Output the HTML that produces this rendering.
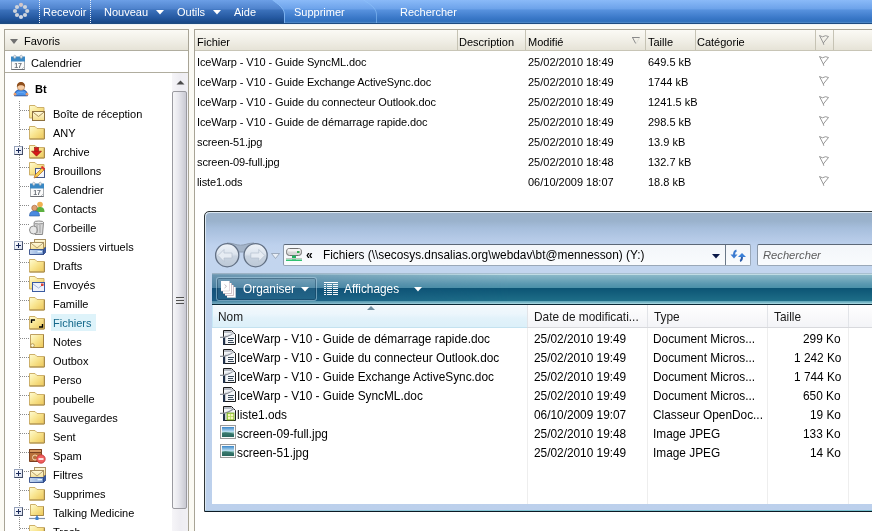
<!DOCTYPE html>
<html><head><meta charset="utf-8">
<style>
*{margin:0;padding:0;box-sizing:border-box}
html,body{width:872px;height:531px;overflow:hidden;background:#fbfaf4;font-family:"Liberation Sans",sans-serif;font-size:11px;color:#000}
.a{position:absolute;will-change:transform}
#top{left:0;top:0;width:872px;height:24px}
#top .lbl{color:#fff;font-size:11px;top:6px;white-space:nowrap}
.dots{top:0;height:24px;width:1px;background:repeating-linear-gradient(to bottom,#e8f0fa 0 1px,transparent 1px 2px)}
.tri{width:0;height:0;border-left:3.5px solid transparent;border-right:3.5px solid transparent;border-top:4px solid #fff}
#lp{left:4px;top:29px;width:185px;height:510px;border:1px solid #a8a496;background:#fff}
.hdr{background:linear-gradient(to bottom,#fbfaf5,#efede4 60%,#e6e3d7)}
.ti{left:53px;font-size:11px;line-height:13px;white-space:nowrap}
.sel{color:#14688a}
.br{left:20px;width:9px;height:1px;background:repeating-linear-gradient(to right,#8a8a8a 0 1px,transparent 1px 2px)}
.plus{left:14px;width:9px;height:9px;border:1px solid;border-color:#98a4bc #46506a #3c4660 #98a4bc;background:linear-gradient(to bottom right,#fff,#d8dff0)}
.plus:before{content:"";position:absolute;left:1px;top:3px;width:5px;height:1px;background:#1a2a5a}
.plus:after{content:"";position:absolute;left:3px;top:1px;width:1px;height:5px;background:#1a2a5a}
#rp{left:194px;top:29px;width:690px;height:510px;border:1px solid #a8a496;background:#fff}
.ch{top:0;height:21px;border-right:1px solid #c6c3b6;padding:5px 0 0 3px;white-space:nowrap}
.fr{white-space:nowrap;font-size:11px}
#win{left:204px;top:211px;width:690px;height:301px;border:1px solid #2c2c2c;border-radius:6px 0 0 0;background:linear-gradient(to bottom,#a7bbd6 0,#b4c6df 20%,#c4d4ea 60%,#c9d8ec 100%);overflow:hidden}
.seg{font-size:11.85px;white-space:nowrap}
</style></head><body>
<svg width="0" height="0" style="position:absolute">
<defs>
 <linearGradient id="gF" x1="0" y1="0" x2="1" y2="1"><stop offset="0" stop-color="#fffcd4"/><stop offset="0.45" stop-color="#f9e692"/><stop offset="1" stop-color="#ecc658"/></linearGradient><linearGradient id="gE" x1="0" y1="0" x2="0" y2="1"><stop offset="0" stop-color="#fffbe0"/><stop offset="1" stop-color="#f4dc88"/></linearGradient><linearGradient id="gT" x1="0" y1="0" x2="1" y2="0"><stop offset="0" stop-color="#c8d8f0"/><stop offset="0.6" stop-color="#9ab8e0"/><stop offset="1" stop-color="#5a80c0"/></linearGradient>
 <linearGradient id="gB" x1="0" y1="0" x2="0" y2="1"><stop offset="0" stop-color="#a8c8ea"/><stop offset="1" stop-color="#3a70b0"/></linearGradient>
 <symbol id="i-folder" viewBox="0 0 18 17"><path d="M1.5 2.5h5.5l2 2h7v10.5h-14.5z" fill="url(#gF)" stroke="#cdb06a"/><path d="M16.5 4.5v10.5h-15" fill="none" stroke="#a88a48"/></symbol>
 <symbol id="i-inbox" viewBox="0 0 18 17"><path d="M1.5 0.5h5.5l2 2h7v10.5h-14.5z" fill="url(#gF)" stroke="#cdb06a"/><rect x="4.5" y="6.5" width="12" height="9" fill="url(#gE)" stroke="#8c7040"/><path d="M4.8 7l5.7 4.5 5.7-4.5" fill="none" stroke="#a08450" stroke-width="0.9"/></symbol>
 <symbol id="i-archive" viewBox="0 0 18 17"><path d="M1.5 2.5h5.5l2 2h7v10.5h-14.5z" fill="url(#gF)" stroke="#cdb06a"/><path d="M16.5 4.5v10.5h-15" fill="none" stroke="#a88a48"/><rect x="6.5" y="4.5" width="4" height="4" fill="#d81818" stroke="#901010" stroke-width="0.6"/><path d="M3.5 8.2H13.5L8.5 13.2Z" fill="#d81818" stroke="#901010" stroke-width="0.6"/></symbol>
 <symbol id="i-drafts" viewBox="0 0 18 17"><path d="M1.5 0.5h5.5l2 2h7v10.5h-14.5z" fill="url(#gF)" stroke="#cdb06a"/><rect x="7.5" y="6.5" width="9" height="9" fill="#f4f6fb" stroke="#4a5a88"/><path d="M6 16l1.2-3.2 7.3-7.3 2 2-7.3 7.3z" fill="#f8d050" stroke="#b06020" stroke-width="0.7"/><path d="M13.5 4.5l3 3" stroke="#e03030" stroke-width="1.8"/></symbol>
 <symbol id="i-cal" viewBox="0 0 18 17"><rect x="2.5" y="3.5" width="13" height="12" fill="#fbfbfb" stroke="#a8acb0"/><path d="M2.5 15.5h13" stroke="#6a6e74"/><rect x="2" y="2.5" width="14" height="5" fill="#3a88c4"/><ellipse cx="5.8" cy="2.8" rx="1.2" ry="1.6" fill="#eef2f6" stroke="#8a98a8" stroke-width="0.6"/><ellipse cx="12.2" cy="2.8" rx="1.2" ry="1.6" fill="#eef2f6" stroke="#8a98a8" stroke-width="0.6"/><text x="5.2" y="13.6" font-size="7" font-weight="bold" font-family="Liberation Sans" fill="#6a7078">17</text><path d="M13 15l2-2" stroke="#b0b4b8" stroke-width="0.8"/></symbol>
 <symbol id="i-contacts" viewBox="0 0 18 17"><circle cx="12" cy="4.5" r="2.8" fill="#f0b050"/><path d="M7.5 12c0-4 2-5 4.5-5s4.5 1 4.5 5z" fill="#5cb040"/><circle cx="6.5" cy="8" r="2.8" fill="#e0a070" stroke="#8a4a20" stroke-width="0.5"/><path d="M1.5 16c0-4 2-5 5-5s5 1 5 5z" fill="#4a8ae0" stroke="#2a5aa0" stroke-width="0.6"/></symbol>
 <symbol id="i-trash" viewBox="0 0 18 17"><path d="M6 3.5h9.5l-1 12h-7.5z" fill="#d8d8d8" stroke="#8a8a8a"/><ellipse cx="10.8" cy="3.5" rx="4.8" ry="1.5" fill="#eee" stroke="#8a8a8a"/><circle cx="5.5" cy="11" r="4" fill="#e8e8e8" stroke="#8a8a8a"/><path d="M9 6v8M12 6v8" stroke="#a0a0a0"/></symbol>
 <symbol id="i-vfold" viewBox="0 0 18 17"><rect x="6.5" y="1.5" width="11" height="8" fill="url(#gE)" stroke="#a89060"/><rect x="2.5" y="4.5" width="13" height="8" fill="url(#gE)" stroke="#a89060"/><path d="M2.8 5l6.2 5 6.2-5" fill="none" stroke="#b09868" stroke-width="0.9"/><path d="M1.5 11.5H15.5L17.5 9.5V14.5L15.5 16.5H1.5Z" fill="url(#gT)" stroke="#304a88" stroke-width="0.9"/><path d="M15.5 11.5V16.5" stroke="#203870"/><path d="M15.5 11.5L17.5 9.5V14.5L15.5 16.5Z" fill="#3a5aa0"/><rect x="9.5" y="13" width="4.5" height="1.4" fill="#e8f4ff"/></symbol>
 <symbol id="i-sent" viewBox="0 0 18 17"><path d="M1.5 0.5h5.5l2 2h7v10.5h-14.5z" fill="url(#gF)" stroke="#cdb06a"/><rect x="4.5" y="6.5" width="12" height="9" fill="#eef2fa" stroke="#3a5aa0"/><path d="M5 8l5.5 4 5.5-4" fill="none" stroke="#90a8d0" stroke-width="0.8"/><rect x="13" y="7.5" width="2.5" height="2.5" fill="#e04030"/></symbol>
 <symbol id="i-files" viewBox="0 0 18 17"><path d="M1.5 2.5h5.5l2 2h7v10.5h-14.5z" fill="url(#gF)" stroke="#cdb06a"/><path d="M16.5 4.5v10.5h-15" fill="none" stroke="#a88a48"/><path d="M3.5 9v-3h3.5M14.5 10v3h-3.5" fill="none" stroke="#000" stroke-width="1.4"/></symbol>
 <symbol id="i-notes" viewBox="0 0 18 17"><path d="M2.5 1.5h13v13h-13z" fill="url(#gF)" stroke="#bfa060"/><path d="M15.5 1.5v13h-13" fill="none" stroke="#a08040"/><circle cx="4.5" cy="12.5" r="1.8" fill="#fff8d0" stroke="#a08040" stroke-width="0.7"/></symbol>
 <symbol id="i-spam" viewBox="0 0 18 17"><path d="M1.5 2.5h12v12h-12z" fill="#b8703a" stroke="#7a4020"/><path d="M1.5 2.5h12v3h-12z" fill="#d89860" stroke="#7a4020"/><circle cx="7" cy="10.5" r="2.5" fill="none" stroke="#f8d8b0" stroke-width="1"/><circle cx="13" cy="12" r="4.2" fill="#f06060" stroke="#c03030" stroke-width="0.8"/><rect x="10.5" y="11.2" width="5" height="1.6" fill="#fff"/></symbol>
 <symbol id="i-net" viewBox="0 0 18 17"><path d="M2.5 0.5h5l2 2h6v9h-13z" fill="url(#gF)" stroke="#cdb06a"/><path d="M15.5 2.5v9h-13" fill="none" stroke="#a88a48"/><path d="M9 11.5v3" stroke="#3a70c0" stroke-width="1.5"/><path d="M1 14.5h16" stroke="#8090a8" stroke-width="1.2"/><rect x="7.5" y="13" width="3" height="3" fill="#3a80d0"/></symbol>
 <symbol id="i-user" viewBox="0 0 16 16"><path d="M1.5 14.8C1.5 10.5 4 8.6 8 8.6S14.5 10.5 14.5 14.8Z" fill="#4a92ea" stroke="#1e4a9a" stroke-width="0.9"/><path d="M4 12.5C5 11 11 11 12 12.5" fill="none" stroke="#8ac0f8" stroke-width="0.8" opacity="0.6"/><circle cx="2" cy="13.2" r="1.4" fill="#e89a68"/><circle cx="14" cy="13.2" r="1.4" fill="#e89a68"/><rect x="4.3" y="2" width="7.4" height="7.2" rx="3.2" fill="#f6cca4" stroke="#9a6a40" stroke-width="0.5"/><path d="M4 6C3.8 2.5 5.5 1 8 1S12.2 2.5 12 6C11 4.5 9 4.2 8 4.2S5 4.5 4 6Z" fill="#8e4e1c"/></symbol>
<symbol id="i-flag" viewBox="0 0 12 11"><path d="M0.5 0.5L3.5 1.8L6.5 0.7L9.5 1.5L4.3 8M0.5 0.5L4.3 8L4.8 9.8" fill="none" stroke="#8c8c8c" stroke-width="0.9"/></symbol>
<symbol id="e-doc" viewBox="0 0 17 16"><path d="M3.5 1.5H11.5L15.5 5.5V15.5H3.5Z" fill="#f4f6f8" stroke="#1a1a1a"/><path d="M4 2H11L13 4H4Z" fill="#b8bcc4"/><rect x="3" y="8" width="2.2" height="8" fill="#203048"/><path d="M0 8.3C5 8.6 9 7.5 14 3.5" fill="none" stroke="#8a8e96" stroke-width="1.2"/><path d="M5 6.5C8 6.2 10 5.5 13 4" fill="none" stroke="#d8dce2" stroke-width="1"/><rect x="8" y="9" width="6" height="1" fill="#3a4a5a"/><rect x="8" y="11" width="5" height="1" fill="#3a4a5a"/><rect x="8" y="13" width="6" height="1" fill="#3a4a5a"/></symbol>
<symbol id="e-ods" viewBox="0 0 17 16"><path d="M3.5 1.5H11.5L15.5 5.5V15.5H3.5Z" fill="#f4f6f8" stroke="#1a1a1a"/><path d="M4 2H11L13 4H4Z" fill="#b8bcc4"/><rect x="3" y="8" width="2.2" height="8" fill="#203048"/><path d="M0 8.3C5 8.6 9 7.5 14 3.5" fill="none" stroke="#8a8e96" stroke-width="1.2"/><rect x="7" y="8" width="7" height="7" fill="#b8e060" stroke="#70a020" stroke-width="0.8"/><rect x="8" y="9" width="2.2" height="2.2" fill="#f8f8c0"/><rect x="11" y="9" width="2.2" height="2.2" fill="#f8f8c0"/><rect x="8" y="12" width="2.2" height="2.2" fill="#f8f8c0"/><rect x="11" y="12" width="2.2" height="2.2" fill="#f8f8c0"/></symbol>
<symbol id="e-img" viewBox="0 0 17 16"><defs><linearGradient id="gSky" x1="0" y1="0" x2="0" y2="1"><stop offset="0" stop-color="#3a86c8"/><stop offset="0.45" stop-color="#b8dcf0"/><stop offset="0.6" stop-color="#7ab8a8"/><stop offset="1" stop-color="#1e5a58"/></linearGradient></defs><rect x="0.5" y="1.5" width="15" height="13" fill="#fafafa" stroke="#9a9a9a"/><rect x="2" y="3" width="12" height="10" fill="url(#gSky)"/><path d="M2 9C5 7.5 9 8.5 14 10V13H2Z" fill="#2a6a60" opacity="0.8"/></symbol>
</defs>
</svg>
<div id="top" class="a">
  <svg class="a" style="left:0;top:0" width="872" height="25">
    <defs>
      <linearGradient id="tA" x1="0" y1="0" x2="0" y2="23" gradientUnits="userSpaceOnUse"><stop offset="0" stop-color="#6c9fe6"/><stop offset="0.39" stop-color="#4e82cc"/><stop offset="0.43" stop-color="#3c72bc"/><stop offset="0.78" stop-color="#2458a0"/><stop offset="0.96" stop-color="#1a4a88"/></linearGradient>
      <linearGradient id="tB" x1="0" y1="0" x2="0" y2="23" gradientUnits="userSpaceOnUse"><stop offset="0" stop-color="#8abaf8"/><stop offset="0.39" stop-color="#6ca2ea"/><stop offset="0.43" stop-color="#5892de"/><stop offset="0.78" stop-color="#3a78c8"/><stop offset="0.93" stop-color="#3070bc"/><stop offset="0.96" stop-color="#4a84c4"/></linearGradient>
    </defs>
    <rect x="0" y="0" width="872" height="23" fill="url(#tB)"/>
    <path d="M0 0H272.5C278 4 284 8 284.5 14V23H0Z" fill="url(#tA)"/>
    <path d="M272.5 0C278 4 284 8 284.5 14V23" fill="none" stroke="#8cc0fa" stroke-width="1" opacity="0.8"/>
    <path d="M363.5 0C370 4 376 8 376.5 14V23" fill="none" stroke="#90c4fa" stroke-width="1" opacity="0.55"/>
    <rect x="0" y="23" width="872" height="1" fill="#1e4c80"/>
    <rect x="0" y="24" width="872" height="1" fill="#eef3f6"/>
  </svg>
  <svg class="a" style="left:12px;top:2px" width="18" height="18" viewBox="0 0 18 18">
    <g fill="#cdd3db">
      <circle cx="9" cy="2.8" r="2.1" fill="#d2c6c8"/><circle cx="13" cy="5" r="2.1"/><circle cx="15.2" cy="9" r="2.1"/><circle cx="13" cy="13" r="2.1"/>
      <circle cx="9" cy="15" r="2.1" fill="#d0d8e6"/><circle cx="5" cy="13" r="2.1"/><circle cx="3" cy="9" r="2.1"/><circle cx="5" cy="5" r="2.1"/>
    </g>
  </svg>
  <div class="a dots" style="left:39px"></div>
  <div class="a lbl" style="left:43px">Recevoir</div>
  <div class="a dots" style="left:90px"></div>
  <div class="a lbl" style="left:104px">Nouveau</div>
  <svg class="a" style="left:156px;top:10px" width="8" height="5"><path d="M0 0h8l-4 4.5z" fill="#fff"/></svg>
  <div class="a lbl" style="left:177px">Outils</div>
  <svg class="a" style="left:213px;top:10px" width="8" height="5"><path d="M0 0h8l-4 4.5z" fill="#fff"/></svg>
  <div class="a lbl" style="left:234px">Aide</div>
  <div class="a lbl" style="left:294px">Supprimer</div>
  <div class="a lbl" style="left:400px">Rechercher</div>
</div>
<div id="lp" class="a"></div>
<div class="a hdr" style="left:5px;top:30px;width:183px;height:21px;border-bottom:1px solid #b0ad9f"></div>
<div class="a" style="left:10px;top:39px;width:0;height:0;border-left:4.5px solid transparent;border-right:4.5px solid transparent;border-top:5px solid #707070"></div>
<div class="a ti" style="left:24px;top:35px">Favoris</div>
<svg class="a" style="left:9px;top:54px" width="18" height="17"><use href="#i-cal"/></svg>
<div class="a ti" style="left:31px;top:57px">Calendrier</div>
<div class="a" style="left:5px;top:72px;width:183px;height:1px;background:#b0ad9f"></div>
<svg class="a" style="left:13px;top:81px" width="16" height="16"><use href="#i-user"/></svg>
<div class="a ti" style="left:35px;top:83px;font-weight:bold">Bt</div>
<div class="a" style="left:19px;top:101px;width:1px;height:430px;background:repeating-linear-gradient(to bottom,#8a8a8a 0 1px,transparent 1px 2px)"></div>
<div class="a" style="left:172px;top:73px;width:16px;height:458px;background:linear-gradient(to right,#f6f5f8,#eeedf2 50%,#f1f0f4)"></div>
<svg class="a" style="left:176px;top:80px" width="9" height="5"><path d="M0.5 4.5L4.5 0.5L8.5 4.5Z" fill="#4a4a4a"/></svg>
<div class="a" style="left:172px;top:91px;width:15px;height:418px;border:1px solid #9a9aa0;border-radius:2px;background:linear-gradient(to right,#f6f6f8,#e8e8ee 40%,#c9c9d2 100%)"></div>
<div class="a" style="left:176px;top:297px;width:8px;height:7px;background:repeating-linear-gradient(to bottom,#505050 0 1px,#e8e8e8 1px 2px,transparent 2px 3px)"></div>

<div class="a" style="left:51px;top:314px;width:45px;height:17px;background:#def3fa"></div>
<div class="a br" style="top:110px"></div>
<svg class="a" style="left:28px;top:105px" width="18" height="17"><use href="#i-inbox"/></svg>
<div class="a ti" style="top:108px">Boîte de réception</div>
<div class="a br" style="top:129px"></div>
<svg class="a" style="left:28px;top:124px" width="18" height="17"><use href="#i-folder"/></svg>
<div class="a ti" style="top:127px">ANY</div>
<div class="a br" style="top:148px"></div>
<div class="a plus" style="top:146px"></div>
<svg class="a" style="left:28px;top:143px" width="18" height="17"><use href="#i-archive"/></svg>
<div class="a ti" style="top:146px">Archive</div>
<div class="a br" style="top:167px"></div>
<svg class="a" style="left:28px;top:162px" width="18" height="17"><use href="#i-drafts"/></svg>
<div class="a ti" style="top:165px">Brouillons</div>
<div class="a br" style="top:186px"></div>
<svg class="a" style="left:28px;top:181px" width="18" height="17"><use href="#i-cal"/></svg>
<div class="a ti" style="top:184px">Calendrier</div>
<div class="a br" style="top:205px"></div>
<svg class="a" style="left:28px;top:200px" width="18" height="17"><use href="#i-contacts"/></svg>
<div class="a ti" style="top:203px">Contacts</div>
<div class="a br" style="top:224px"></div>
<svg class="a" style="left:28px;top:219px" width="18" height="17"><use href="#i-trash"/></svg>
<div class="a ti" style="top:222px">Corbeille</div>
<div class="a br" style="top:243px"></div>
<div class="a plus" style="top:241px"></div>
<svg class="a" style="left:28px;top:238px" width="18" height="17"><use href="#i-vfold"/></svg>
<div class="a ti" style="top:241px">Dossiers virtuels</div>
<div class="a br" style="top:262px"></div>
<svg class="a" style="left:28px;top:257px" width="18" height="17"><use href="#i-folder"/></svg>
<div class="a ti" style="top:260px">Drafts</div>
<div class="a br" style="top:281px"></div>
<svg class="a" style="left:28px;top:276px" width="18" height="17"><use href="#i-sent"/></svg>
<div class="a ti" style="top:279px">Envoyés</div>
<div class="a br" style="top:300px"></div>
<svg class="a" style="left:28px;top:295px" width="18" height="17"><use href="#i-folder"/></svg>
<div class="a ti" style="top:298px">Famille</div>
<div class="a br" style="top:319px"></div>
<svg class="a" style="left:28px;top:314px" width="18" height="17"><use href="#i-files"/></svg>
<div class="a ti sel" style="top:317px">Fichiers</div>
<div class="a br" style="top:338px"></div>
<svg class="a" style="left:28px;top:333px" width="18" height="17"><use href="#i-notes"/></svg>
<div class="a ti" style="top:336px">Notes</div>
<div class="a br" style="top:357px"></div>
<svg class="a" style="left:28px;top:352px" width="18" height="17"><use href="#i-folder"/></svg>
<div class="a ti" style="top:355px">Outbox</div>
<div class="a br" style="top:376px"></div>
<svg class="a" style="left:28px;top:371px" width="18" height="17"><use href="#i-folder"/></svg>
<div class="a ti" style="top:374px">Perso</div>
<div class="a br" style="top:395px"></div>
<svg class="a" style="left:28px;top:390px" width="18" height="17"><use href="#i-folder"/></svg>
<div class="a ti" style="top:393px">poubelle</div>
<div class="a br" style="top:414px"></div>
<svg class="a" style="left:28px;top:409px" width="18" height="17"><use href="#i-folder"/></svg>
<div class="a ti" style="top:412px">Sauvegardes</div>
<div class="a br" style="top:433px"></div>
<svg class="a" style="left:28px;top:428px" width="18" height="17"><use href="#i-folder"/></svg>
<div class="a ti" style="top:431px">Sent</div>
<div class="a br" style="top:452px"></div>
<svg class="a" style="left:28px;top:447px" width="18" height="17"><use href="#i-spam"/></svg>
<div class="a ti" style="top:450px">Spam</div>
<div class="a br" style="top:471px"></div>
<div class="a plus" style="top:469px"></div>
<svg class="a" style="left:28px;top:466px" width="18" height="17"><use href="#i-vfold"/></svg>
<div class="a ti" style="top:469px">Filtres</div>
<div class="a br" style="top:490px"></div>
<svg class="a" style="left:28px;top:485px" width="18" height="17"><use href="#i-folder"/></svg>
<div class="a ti" style="top:488px">Supprimes</div>
<div class="a br" style="top:509px"></div>
<div class="a plus" style="top:507px"></div>
<svg class="a" style="left:28px;top:504px" width="18" height="17"><use href="#i-net"/></svg>
<div class="a ti" style="top:507px">Talking Medicine</div>
<div class="a br" style="top:528px"></div>
<svg class="a" style="left:28px;top:523px" width="18" height="17"><use href="#i-folder"/></svg>
<div class="a ti" style="top:526px">Trash</div><div id="rp" class="a"></div>
<div class="a hdr" style="left:195px;top:30px;width:677px;height:21px;border-bottom:1px solid #c8c5b6"></div>
<div class="a" style="left:457px;top:30px;width:1px;height:20px;background:#c6c3b4"></div>
<div class="a" style="left:525px;top:30px;width:1px;height:20px;background:#c6c3b4"></div>
<div class="a" style="left:645px;top:30px;width:1px;height:20px;background:#c6c3b4"></div>
<div class="a" style="left:695px;top:30px;width:1px;height:20px;background:#c6c3b4"></div>
<div class="a" style="left:815px;top:30px;width:1px;height:20px;background:#c6c3b4"></div>
<div class="a" style="left:833px;top:30px;width:1px;height:20px;background:#c6c3b4"></div>
<div class="a ti" style="left:197px;top:36px">Fichier</div>
<div class="a ti" style="left:459px;top:36px">Description</div>
<div class="a ti" style="left:528px;top:36px">Modifié</div>
<div class="a ti" style="left:648px;top:36px">Taille</div>
<div class="a ti" style="left:697px;top:36px">Catégorie</div>
<svg class="a" style="left:631px;top:36px" width="10" height="9"><path d="M1 1.5h8" stroke="#8a8a8a" stroke-width="1"/><path d="M1.5 1.5L4.7 7.5" stroke="#8a8a8a" stroke-width="1"/><path d="M8.5 1.5L5.2 7.5" stroke="#dcdcd4" stroke-width="0.8"/></svg>
<svg class="a" style="left:819px;top:35px" width="12" height="11"><use href="#i-flag"/></svg>
<div class="a ti" style="left:197px;top:56px;letter-spacing:-0.1px">IceWarp - V10 - Guide SyncML.doc</div>
<div class="a ti" style="left:528px;top:56px">25/02/2010 18:49</div>
<div class="a ti" style="left:648px;top:56px">649.5 kB</div>
<svg class="a" style="left:819px;top:56px" width="12" height="11"><use href="#i-flag"/></svg>
<div class="a ti" style="left:197px;top:76px;letter-spacing:-0.1px">IceWarp - V10 - Guide Exchange ActiveSync.doc</div>
<div class="a ti" style="left:528px;top:76px">25/02/2010 18:49</div>
<div class="a ti" style="left:648px;top:76px">1744 kB</div>
<svg class="a" style="left:819px;top:76px" width="12" height="11"><use href="#i-flag"/></svg>
<div class="a ti" style="left:197px;top:96px;letter-spacing:-0.1px">IceWarp - V10 - Guide du connecteur Outlook.doc</div>
<div class="a ti" style="left:528px;top:96px">25/02/2010 18:49</div>
<div class="a ti" style="left:648px;top:96px">1241.5 kB</div>
<svg class="a" style="left:819px;top:96px" width="12" height="11"><use href="#i-flag"/></svg>
<div class="a ti" style="left:197px;top:116px;letter-spacing:-0.1px">IceWarp - V10 - Guide de démarrage rapide.doc</div>
<div class="a ti" style="left:528px;top:116px">25/02/2010 18:49</div>
<div class="a ti" style="left:648px;top:116px">298.5 kB</div>
<svg class="a" style="left:819px;top:116px" width="12" height="11"><use href="#i-flag"/></svg>
<div class="a ti" style="left:197px;top:136px;letter-spacing:-0.1px">screen-51.jpg</div>
<div class="a ti" style="left:528px;top:136px">25/02/2010 18:49</div>
<div class="a ti" style="left:648px;top:136px">13.9 kB</div>
<svg class="a" style="left:819px;top:136px" width="12" height="11"><use href="#i-flag"/></svg>
<div class="a ti" style="left:197px;top:156px;letter-spacing:-0.1px">screen-09-full.jpg</div>
<div class="a ti" style="left:528px;top:156px">25/02/2010 18:48</div>
<div class="a ti" style="left:648px;top:156px">132.7 kB</div>
<svg class="a" style="left:819px;top:156px" width="12" height="11"><use href="#i-flag"/></svg>
<div class="a ti" style="left:197px;top:176px;letter-spacing:-0.1px">liste1.ods</div>
<div class="a ti" style="left:528px;top:176px">06/10/2009 18:07</div>
<div class="a ti" style="left:648px;top:176px">18.8 kB</div>
<svg class="a" style="left:819px;top:176px" width="12" height="11"><use href="#i-flag"/></svg><div class="a" style="left:204px;top:211px;width:680px;height:301px;border:1px solid #2e3436;border-radius:5px 0 0 0;background:linear-gradient(to bottom,#9cb2ca 0,#9ab2cc 9px,#a6bedc 16px,#b4c9e6 26px,#bdd1ed 33px,#c3d5ee 45px,#c2d5ee 60px,#bcd0ec 100%);box-shadow:inset 1px 1px 0 #dce8f2;overflow:hidden"></div>
<svg class="a" style="left:212px;top:240px" width="74" height="30">
<defs><linearGradient id="gBtn" x1="0" y1="0" x2="0" y2="1"><stop offset="0" stop-color="#f0f4f8"/><stop offset="0.45" stop-color="#dce4ee"/><stop offset="0.55" stop-color="#c8d3e0"/><stop offset="1" stop-color="#bcc8d6"/></linearGradient></defs>
<path d="M15 3c6 0 9 2.2 13.5 2.2S36 3 42 3V12H15z" fill="#a4b4c8" stroke="#8d9cb0" stroke-width="1"/>
<circle cx="15.2" cy="15.2" r="11.6" fill="url(#gBtn)" stroke="#627084" stroke-width="1.3"/>
<circle cx="43.6" cy="15.2" r="11.6" fill="url(#gBtn)" stroke="#627084" stroke-width="1.3"/>
<path d="M6 15.5l6-6v3.5h8v5h-8v3.5z" fill="#e6ecf3" stroke="#b4c0ce" stroke-width="0.7"/>
<path d="M52.8 15.5l-6-6v3.5h-8v5h8v3.5z" fill="#e6ecf3" stroke="#b4c0ce" stroke-width="0.7"/>
<path d="M59.5 13.5h8l-4 5z" fill="#e8eef6" stroke="#8d9cb0" stroke-width="0.8"/>
</svg>
<div class="a" style="left:283px;top:244px;width:468px;height:22px;border:1px solid #9aa8b8;border-top-color:#5c6878;border-left-color:#8a98a8;border-radius:2px;background:linear-gradient(to bottom,#f3f6fa,#f9fbfd)"></div>
<div class="a" style="left:725px;top:245px;width:1px;height:20px;background:#6a7888"></div>
<svg class="a" style="left:712px;top:254px" width="8" height="5"><path d="M0 0h8l-4 4.5z" fill="#0a1848"/></svg>
<svg class="a" style="left:286px;top:247px" width="16" height="15">
<rect x="0.5" y="1.5" width="15" height="7" rx="3" fill="#d8d8d8" stroke="#707070"/>
<rect x="1.5" y="2" width="13" height="2.5" rx="1" fill="#f4f4f4"/>
<rect x="11" y="4" width="2.5" height="2" fill="#30b050"/>
<rect x="6" y="8.5" width="4" height="4" fill="#20b060"/>
<rect x="0" y="12.5" width="16" height="1.5" fill="#30c070"/>
<rect x="0" y="11" width="16" height="1" fill="#c0c8c0"/>
</svg>
<div class="a seg" style="left:306px;top:248px;font-weight:bold;font-size:12px">«</div>
<div class="a seg" style="left:323px;top:248px">Fichiers (\\secosys.dnsalias.org\webdav\bt@mennesson) (Y:)</div>
<svg class="a" style="left:730px;top:249px" width="16" height="13">
<path d="M6.5 1.5C4.5 2 4 3.5 4 6" fill="none" stroke="#3a7ad0" stroke-width="2"/>
<path d="M0.5 5.5h7l-3.5 4z" fill="#3a7ad0"/>
<path d="M10 12C12 11.5 12 10 12 7.5" fill="none" stroke="#2a5aa8" stroke-width="2"/>
<path d="M8 8h8l-4-4z" fill="#3a80d8"/>
</svg>
<div class="a" style="left:757px;top:244px;width:130px;height:22px;border:1px solid #9aa8b8;border-top-color:#5c6878;border-left-color:#8a98a8;border-radius:2px;background:linear-gradient(to bottom,#f3f6fa,#f9fbfd)"></div>
<div class="a seg" style="left:763px;top:249px;font-style:italic;color:#5c5c5c;font-size:11.2px">Rechercher</div>
<div class="a" style="left:212px;top:273px;width:670px;height:32px;background:linear-gradient(to bottom,#9ab0c4 0,#9ab0c4 1px,#7ca2b8 1px,#6a94b0 2px,#4a80a2 15px,#14507a 15px,#1a5a84 28px,#4a88a4 28px,#6aa0b8 30.5px,#0a2a3a 31px,#0a2a3a 32px)"></div>
<div class="a" style="left:212px;top:273px;width:670px;height:32px;background:linear-gradient(to bottom,#a8c0d0 0,#a8c0d0 1px,#c0dce4 1px,#c0dce4 2px,#8ab8c8 2px,#5a98b0 11px,#4a90a8 15px,#0c5474 15px,#1e6e88 28px,#58a2b6 28px,#7ab8c8 29.5px,#a0d2dc 30.5px,#0a2836 31px,#0a2836 32px);-webkit-mask-image:linear-gradient(to right,rgba(0,0,0,0.05) 0,rgba(0,0,0,0.6) 150px,#000 300px)"></div>
<div class="a" style="left:216px;top:277px;width:101px;height:24px;border:1px solid rgba(170,205,225,0.55);border-radius:3px;box-shadow:inset 0 0 0 1px rgba(10,40,70,0.35);background:linear-gradient(to bottom,rgba(255,255,255,0.08),rgba(255,255,255,0.04))"></div>
<svg class="a" style="left:221px;top:281px" width="15" height="17">
<rect x="6" y="6" width="8.5" height="10.5" fill="#fff"/><path d="M6 16.5h8.5V6" fill="none" stroke="#c8d0d8" stroke-width="0.7"/>
<rect x="4" y="4" width="8.5" height="10.5" fill="#fbfbfc"/><path d="M4 14.5h8.5V4" fill="none" stroke="#c0a8b0" stroke-width="0.7"/>
<rect x="2" y="2" width="8.5" height="10.5" fill="#fff"/><path d="M2 12.5h8.5V2" fill="none" stroke="#c0a8b0" stroke-width="0.7"/>
<rect x="0" y="0" width="8.5" height="10" fill="#fff"/><path d="M0 10h8.5V0" fill="none" stroke="#d0c0c8" stroke-width="0.6"/>
<path d="M3.5 3.5l2 1.8-2 1.8" fill="none" stroke="#b0a8b0" stroke-width="0.8"/>
</svg>
<div class="a seg" style="left:243px;top:282px;color:#fff">Organiser</div>
<svg class="a" style="left:301px;top:287px" width="8" height="5"><path d="M0 0h8l-4 4.5z" fill="#fff"/></svg>
<svg class="a" style="left:324px;top:282px" width="14" height="14"><g fill="#fff" opacity="0.95"><rect x="0" y="0" width="2" height="1"/><rect x="3" y="0" width="5" height="1"/><rect x="9" y="0" width="5" height="1"/><rect x="0" y="2" width="2" height="1"/><rect x="3" y="2" width="5" height="1"/><rect x="9" y="2" width="5" height="1"/><rect x="0" y="4" width="2" height="1"/><rect x="3" y="4" width="5" height="1"/><rect x="9" y="4" width="5" height="1"/><rect x="0" y="6" width="2" height="1"/><rect x="3" y="6" width="5" height="1"/><rect x="9" y="6" width="5" height="1"/><rect x="0" y="8" width="2" height="1"/><rect x="3" y="8" width="5" height="1"/><rect x="9" y="8" width="5" height="1"/><rect x="0" y="10" width="2" height="1"/><rect x="3" y="10" width="5" height="1"/><rect x="9" y="10" width="5" height="1"/><rect x="0" y="12" width="2" height="1"/><rect x="3" y="12" width="5" height="1"/><rect x="9" y="12" width="5" height="1"/></g><rect x="0" y="0" width="14" height="1" fill="#fff"/></svg>
<div class="a seg" style="left:344px;top:282px;color:#fff">Affichages</div>
<svg class="a" style="left:414px;top:287px" width="8" height="5"><path d="M0 0h8l-4 4.5z" fill="#fff"/></svg>
<div class="a" style="left:205px;top:510px;width:667px;height:1px;background:linear-gradient(to right,#a8c8e0,#80c4d4 300px,#78c0d0)"></div>
<div class="a" style="left:205px;top:511px;width:667px;height:1px;background:#0c1a24"></div>
<div class="a" style="left:212px;top:305px;width:670px;height:199px;background:#fff"></div>
<div class="a" style="left:212px;top:305px;width:670px;height:23px;background:linear-gradient(to bottom,#ffffff 0,#fbfbfc 35%,#f3f4f7 100%);border-bottom:1px solid #d8d9dd"></div>
<div class="a" style="left:212px;top:305px;width:315px;height:23px;background:linear-gradient(to bottom,#fbfdff 0,#f2f8fc 1px,#ecf6fc 40%,#e2f2fa 60%,#dcf0f9 100%);border-bottom:1px solid #c4e2f0;box-shadow:inset 1px 0 0 #c8e8f6"></div>
<div class="a" style="left:367px;top:306px;width:0;height:0;border-left:4px solid transparent;border-right:4px solid transparent;border-bottom:4px solid #6f8ea0"></div>
<div class="a" style="left:527px;top:305px;width:1px;height:22px;background:#e2e4e8"></div>
<div class="a" style="left:527px;top:328px;width:1px;height:176px;background:#eeeeee"></div>
<div class="a" style="left:647px;top:305px;width:1px;height:22px;background:#e2e4e8"></div>
<div class="a" style="left:647px;top:328px;width:1px;height:176px;background:#eeeeee"></div>
<div class="a" style="left:767px;top:305px;width:1px;height:22px;background:#e2e4e8"></div>
<div class="a" style="left:767px;top:328px;width:1px;height:176px;background:#eeeeee"></div>
<div class="a" style="left:848px;top:305px;width:1px;height:22px;background:#e2e4e8"></div>
<div class="a" style="left:848px;top:328px;width:1px;height:176px;background:#eeeeee"></div>
<div class="a seg" style="left:218px;top:310px;color:#1a1a1a">Nom</div>
<div class="a seg" style="left:534px;top:310px;color:#1a1a1a">Date de modificati...</div>
<div class="a seg" style="left:654px;top:310px;color:#1a1a1a">Type</div>
<div class="a seg" style="left:774px;top:310px;color:#1a1a1a">Taille</div>
<svg class="a" style="left:220px;top:329px" width="17" height="16"><use href="#e-doc"/></svg>
<div class="a seg" style="left:237px;top:332px">IceWarp - V10 - Guide de démarrage rapide.doc</div>
<div class="a seg" style="left:534px;top:332px">25/02/2010 19:49</div>
<div class="a seg" style="left:653px;top:332px">Document Micros...</div>
<div class="a seg" style="right:31px;top:332px;text-align:right">299 Ko</div>
<svg class="a" style="left:220px;top:348px" width="17" height="16"><use href="#e-doc"/></svg>
<div class="a seg" style="left:237px;top:351px">IceWarp - V10 - Guide du connecteur Outlook.doc</div>
<div class="a seg" style="left:534px;top:351px">25/02/2010 19:49</div>
<div class="a seg" style="left:653px;top:351px">Document Micros...</div>
<div class="a seg" style="right:31px;top:351px;text-align:right">1 242 Ko</div>
<svg class="a" style="left:220px;top:367px" width="17" height="16"><use href="#e-doc"/></svg>
<div class="a seg" style="left:237px;top:370px">IceWarp - V10 - Guide Exchange ActiveSync.doc</div>
<div class="a seg" style="left:534px;top:370px">25/02/2010 19:49</div>
<div class="a seg" style="left:653px;top:370px">Document Micros...</div>
<div class="a seg" style="right:31px;top:370px;text-align:right">1 744 Ko</div>
<svg class="a" style="left:220px;top:386px" width="17" height="16"><use href="#e-doc"/></svg>
<div class="a seg" style="left:237px;top:389px">IceWarp - V10 - Guide SyncML.doc</div>
<div class="a seg" style="left:534px;top:389px">25/02/2010 19:49</div>
<div class="a seg" style="left:653px;top:389px">Document Micros...</div>
<div class="a seg" style="right:31px;top:389px;text-align:right">650 Ko</div>
<svg class="a" style="left:220px;top:405px" width="17" height="16"><use href="#e-ods"/></svg>
<div class="a seg" style="left:237px;top:408px">liste1.ods</div>
<div class="a seg" style="left:534px;top:408px">06/10/2009 19:07</div>
<div class="a seg" style="left:653px;top:408px">Classeur OpenDoc...</div>
<div class="a seg" style="right:31px;top:408px;text-align:right">19 Ko</div>
<svg class="a" style="left:220px;top:424px" width="17" height="16"><use href="#e-img"/></svg>
<div class="a seg" style="left:237px;top:427px">screen-09-full.jpg</div>
<div class="a seg" style="left:534px;top:427px">25/02/2010 19:48</div>
<div class="a seg" style="left:653px;top:427px">Image JPEG</div>
<div class="a seg" style="right:31px;top:427px;text-align:right">133 Ko</div>
<svg class="a" style="left:220px;top:443px" width="17" height="16"><use href="#e-img"/></svg>
<div class="a seg" style="left:237px;top:446px">screen-51.jpg</div>
<div class="a seg" style="left:534px;top:446px">25/02/2010 19:49</div>
<div class="a seg" style="left:653px;top:446px">Image JPEG</div>
<div class="a seg" style="right:31px;top:446px;text-align:right">14 Ko</div></body></html>
